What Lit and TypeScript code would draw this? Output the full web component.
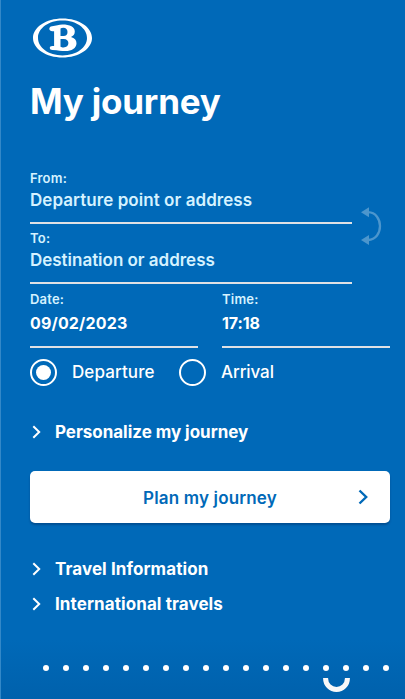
import { LitElement, html, css } from "lit";
import { customElement, property, state } from "lit/decorators.js";

@customElement("journey-field")
class JourneyField extends LitElement {
  @property() label = "";
  @property() value = "";
  @property({ type: Boolean }) filled = false;

  static styles = css`
    :host { display: block; box-sizing: border-box; height: 60px; border-bottom: 2px solid #dfe1e5; color: #d5f2ff; white-space: nowrap; }
    .label { font-size: 13px; line-height: 18px; height: 18px; font-weight: 600; padding-top: 5px; letter-spacing: 0.2px; }
    .value { font-size: 17px; line-height: 24px; font-weight: 600; padding-top: 1px; letter-spacing: var(--value-spacing, 0); }
    .filled { padding-top: 3px; color: #fff; font-size: 16px; font-weight: 700; }
  `;

  render() {
    return html`<div class="label">${this.label}</div><div class="value ${this.filled ? "filled" : ""}">${this.value}</div>`;
  }
}

@customElement("app-root")
class AppRoot extends LitElement {
  @state() private mode = "Departure";

  static styles = css`
    :host { display: block; font-family: Inter, "Liberation Sans", sans-serif; }
    * { box-sizing: border-box; }
    .page { height: 699px; overflow: hidden; padding: 18px 15px 0 29px; border-left: 1px solid #3388c8; color: #fff;
      background: linear-gradient(#0069b8 0, #0069b8 640px, #0061ac 699px); white-space: nowrap; }
    .logo { display: block; margin-left: 3px; }
    h1 { margin: 22px 0 0; height: 42px; line-height: 42px; font-size: 35px; font-weight: 700; letter-spacing: -0.2px; }
    .route { display: flex; margin-top: 42px; height: 120px; }
    .stops { width: 322px; }
    .from { --value-spacing: 0.06px; }
    .to { --value-spacing: -0.02px; }
    .date { --value-spacing: 0.17px; }
    .time { --value-spacing: -0.1px; }
    .swap { margin: 42px 0 0 8px; }
    .when { display: flex; gap: 24px; }
    .when journey-field { width: 168px; height: 64px; padding-top: 1px; }
    .modes { display: flex; margin-top: 11px; height: 27px; }
    .mode { display: flex; align-items: center; gap: 15px; font-size: 17px; font-weight: 500; }
    .modename { padding-bottom: 2px; letter-spacing: 0.1px; }
    .second .modename { letter-spacing: -0.1px; }
    .first { width: 149px; }
    .radio { width: 27px; height: 27px; border: 2px solid #fff; border-radius: 50%; display: grid; place-items: center; }
    .knob { width: 15px; height: 15px; border-radius: 50%; background: #fff; }
    .link { display: flex; align-items: center; gap: 14px; height: 35px; padding-left: 2px; font-size: 17px; font-weight: 700; letter-spacing: 0.09px; }
    .link svg { flex: none; }
    .personalize { margin-top: 28px; letter-spacing: -0.03px; }
    .plan { display: grid; grid-template-columns: 33px 1fr 33px; align-items: center; width: 360px; height: 52px; margin: 22px 0 28px; padding: 0 10px;
      border: 0; border-radius: 5px; background: #fff; color: #0069b8; font: 600 17px/24px Inter, sans-serif; box-shadow: 0 2px 2px rgba(0, 40, 90, .4); }
    .plan .text { grid-column: 2; padding-top: 2px; letter-spacing: 0.16px; }
    .plan svg { justify-self: center; }
    .track { display: flex; gap: 14px; margin: 44px 0 0 13px; }
    .dot { width: 6px; height: 6px; border-radius: 50%; background: #fff; }
    .smile { display: block; margin: 7px 0 0 293px; }
  `;

  private chevron() {
    return html`<svg width="9" height="14" viewBox="0 0 9 14" fill="none" stroke="currentColor" stroke-width="2"><path d="M1.3 1.2 7.2 7 1.3 12.8" /></svg>`;
  }

  private link(text: string, cls: string) {
    return html`<div class="link ${cls}">${this.chevron()}<span>${text}</span></div>`;
  }

  private radio(name: string, cls: string) {
    return html`<div class="mode ${cls}" @click=${() => (this.mode = name)}>
      <span class="radio">${this.mode === name ? html`<span class="knob"></span>` : ""}</span><span class="modename">${name}</span></div>`;
  }

  render() {
    return html`<div class="page">
      <svg class="logo" width="59" height="40" viewBox="0 0 59 40" fill="#fff" fill-rule="evenodd">
        <path d="M29.5.5C45.8.5 59 9.200 59 20S45.800 39.500 29.500 39.500 0 30.800 0 20 13.200.5 29.500.5ZM29.500 2.600C15.600 2.600 5 10.300 5 20s10.600 17.400 24.500 17.400S54 29.700 54 20 43.400 2.600 29.500 2.600Z" />
        <path d="M16.300 10.800c0-1.400 1.100-2.400 2.700-2.600 4.200-.4 7-1.600 10.300-1.600 7.700 0 12.500 2.300 12.500 7 0 3-1.500 4.500-3.800 5.400 3.500 1 5.500 3 5.500 6.200 0 5-5 7.900-11 7.900-4.300 0-7.300-1-13-1.200-1.700 0-2.700-.7-2.700-1.900 0-1.200.9-1.900 2.500-1.900h1.800V13.200h-1.700c-1.800 0-3.100-.9-3.100-2.400ZM27.500 10.500v7.600h3c2.700 0 4-1.400 4-4s-1.400-4.300-4.300-4.300c-1 0-1.900.2-2.700.7ZM27.500 20.900v7.800c.9.500 1.700.7 3 .7 3.200 0 4.900-1.600 4.900-4.300 0-2.600-1.700-4.200-4.600-4.200h-3.300Z" />
      </svg>
      <h1>My journey</h1>
      <div class="route">
        <div class="stops">
          <journey-field class="from" label="From:" value="Departure point or address"></journey-field>
          <journey-field class="to" label="To:" value="Destination or address"></journey-field>
        </div>
        <svg class="swap" width="24" height="42" viewBox="0 0 24 42" fill="#4c96cd">
          <path d="M8 6.200C24 6.700 24 33.500 8 34" fill="none" stroke="#4c96cd" stroke-width="2.300" />
          <path d="M1 6.300 9 1.200v10ZM1 34 9 29v10Z" />
        </svg>
      </div>
      <div class="when">
        <journey-field class="date" label="Date:" value="09/02/2023" filled></journey-field>
        <journey-field class="time" label="Time:" value="17:18" filled></journey-field>
      </div>
      <div class="modes">${this.radio("Departure", "first")}${this.radio("Arrival", "second")}</div>
      ${this.link("Personalize my journey", "personalize")}
      <button class="plan"><span class="text">Plan my journey</span>
        <svg width="11" height="16" viewBox="0 0 11 16" fill="none" stroke="currentColor" stroke-width="2.400"><path d="M1.500 1.500 8.200 8l-6.700 6.500" /></svg></button>
      ${this.link("Travel Information", "travel")}
      ${this.link("International travels", "international")}
      <div class="track">${Array.from({ length: 18 }, () => html`<span class="dot"></span>`)}</div>
      <svg class="smile" width="27" height="14" viewBox="0 0 27 14" fill="none" stroke="#f8f8f8" stroke-width="5">
        <path d="M2.600 0v.6a10.900 10.900 0 0 0 21.800 0V0" />
      </svg>
    </div>`;
  }
}
